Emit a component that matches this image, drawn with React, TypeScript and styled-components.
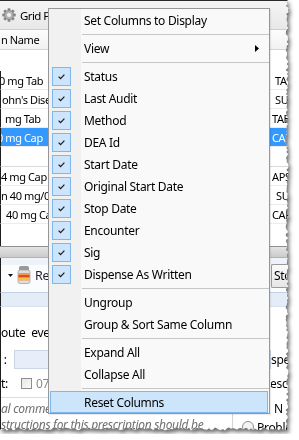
import React from 'react';
import styled, { createGlobalStyle } from 'styled-components';

const GlobalStyle = createGlobalStyle`
  html, body {
    margin: 0;
    padding: 0;
    background: #fff;
  }
  body {
    font-family: 'Noto Sans', 'Segoe UI', sans-serif;
    font-size: 12px;
    letter-spacing: -0.3px;
    color: #000;
  }
`;

// jagged right and bottom edge of the torn screenshot
const tornEdge = () => {
  let seed = 11;
  const rnd = () => {
    seed = (seed * 16807) % 2147483647;
    return (seed % 1000) / 1000;
  };
  const pts = ['0px 0px'];
  for (let y = 0; y <= 428; y += 2) pts.push(`${(285.5 + rnd() * 3).toFixed(1)}px ${y}px`);
  for (let x = 287; x >= 0; x -= 2) pts.push(`${x}px ${(427.5 + rnd() * 3).toFixed(1)}px`);
  pts.push('0px 429px');
  return `polygon(${pts.join(',')})`;
};

const Shot = styled.div`
  width: 298px;
  filter: drop-shadow(2px 3px 2px rgba(0, 0, 0, 0.6));
`;

const Paper = styled.div`
  position: relative;
  width: 290px;
  height: 434px;
  overflow: hidden;
  background: #fff;
  display: flex;
  flex-direction: column;
`;

const TitleBar = styled.div`
  height: 30px;
  box-sizing: border-box;
  border-top: 1px solid #2a2a2a;
  border-bottom: 1px solid #cdcdcd;
  background: linear-gradient(#f5f5f5, #e8e8e8);
  display: flex;
  align-items: center;
  gap: 4px;
  padding-left: 2px;
  font-size: 11.5px;
  letter-spacing: -0.6px;
`;

const Columns = styled.div`
  display: grid;
  grid-template-columns: 270px 1fr;
  align-items: center;
`;

const GridHeader = styled(Columns)`
  height: 20px;
  box-sizing: border-box;
  border-bottom: 1px solid #d6d6d6;
  background: linear-gradient(#fdfdfd, #f1f1f1);
  padding-left: 1px;
  font-size: 11px;
  letter-spacing: -0.4px;
`;

const FilterRow = styled.div`
  height: 21px;
`;

const GridRow = styled(Columns)<{ $selected?: boolean; $height?: number; $line?: string }>`
  height: ${(p) => p.$height ?? 19}px;
  box-sizing: border-box;
  border-bottom: 1px solid ${(p) => p.$line ?? '#ececec'};
  background: ${(p) => (p.$selected ? '#3399ff' : 'transparent')};
  color: ${(p) => (p.$selected ? '#fff' : '#000')};
  white-space: nowrap;
  overflow: hidden;
  border-left: 1px solid #1e1e1e;
  font-size: 11px;
  letter-spacing: -0.4px;
`;

const Cell = styled.span<{ $shift?: number }>`
  overflow: hidden;
  text-indent: ${(p) => p.$shift ?? 0}px;
  white-space: nowrap;
`;

const GridFill = styled.div`
  height: 22px;
  border-left: 1px solid #1e1e1e;
`;

const Splitter = styled.div`
  height: 12px;
  box-sizing: border-box;
  border-top: 1px solid #8f8f8f;
  border-bottom: 1px solid #b3b3b3;
  background: linear-gradient(#e4e4e4, #cbcbcb);
`;

const Toolbar = styled(Columns)`
  height: 34px;
  box-sizing: border-box;
  background: linear-gradient(#eef3fa 0 7px, #fbfcfe 7px);
  border-left: 1px solid #1e1e1e;
`;

const ToolGroup = styled.div`
  display: flex;
  align-items: center;
  padding-left: 7px;
  gap: 4px;
  color: #2a1a2a;
  font-size: 12.5px;
`;

const StopButton = styled.div`
  height: 24px;
  margin-top: 1px;
  box-sizing: border-box;
  border: 1px solid #9a9a9a;
  border-right: none;
  border-radius: 2px 0 0 2px;
  background: linear-gradient(#fafafa, #e6e6e6);
  padding-left: 2px;
  line-height: 22px;
`;

const InfoBand = styled.div`
  height: 15px;
  box-sizing: border-box;
  border-top: 1px solid #c3d1e6;
  border-bottom: 1px solid #d7e0ee;
  background: #e4ecf8;
  border-left: 1px solid #1e1e1e;
`;

const Form = styled.div`
  flex: 1;
  display: flex;
  flex-direction: column;
  border-left: 1px solid #1e1e1e;
`;

const FormRow = styled(Columns)<{ $top: number; $height: number }>`
  margin-top: ${(p) => p.$top}px;
  height: ${(p) => p.$height}px;
  white-space: nowrap;
`;

const FieldLine = styled.div`
  display: flex;
  align-items: center;
  gap: 4px;
  overflow: hidden;
`;

const Input = styled.div`
  flex: 1;
  height: 19px;
  box-sizing: border-box;
  border: 1px solid #cad5e5;
  background: #e7eef9;
  margin-left: 3px;
`;

const Box = styled.span`
  width: 11px;
  height: 11px;
  box-sizing: border-box;
  border: 1px solid #8d8d8d;
  background: linear-gradient(135deg, #e6e6e6, #fafafa);
  margin-left: 9px;
`;

const Muted = styled.span`
  color: #8a8a8a;
`;

const Divider = styled.div`
  height: 1px;
  width: 232px;
  background: #dcdcdc;
  margin-top: 4px;
`;

const Note = styled.div`
  font-style: italic;
  color: #6f6f6f;
  white-space: nowrap;
  overflow: hidden;
`;

const ProblemCell = styled.div`
  align-self: start;
  display: flex;
  align-items: center;
  gap: 3px;
  height: 20px;
  border-left: 1px solid #d4d4d4;
  padding: 6px 0 0 9px;
  margin-left: -39px;
  box-sizing: border-box;
`;

const Radio = styled.span`
  width: 10px;
  height: 10px;
  border-radius: 50%;
  border: 1px solid #8e8e8e;
  background: #f4f4f4;
`;

/* ---------- context menu ---------- */

const Menu = styled.div`
  position: absolute;
  left: 48px;
  top: 8px;
  width: 222px;
  box-sizing: border-box;
  border: 1px solid #979797;
  background: linear-gradient(to right, #f1f1f1 32px, #f9f9f9 32px);
  letter-spacing: -0.3px;
  box-shadow: 1px 1px 1px rgba(0, 0, 0, 0.08);
`;

const Item = styled.div<{ $active?: boolean }>`
  height: 22px;
  box-sizing: border-box;
  display: flex;
  align-items: center;
  padding: 0 10px 0 ${(p) => (p.$active ? 1 : 3)}px;
  margin: 0 ${(p) => (p.$active ? '1px 0 1px' : '0')};
  border: ${(p) => (p.$active ? '1px solid #7eb6ee' : 'none')};
  background: ${(p) => (p.$active ? '#cde5fb' : 'transparent')};
`;

const CheckSlot = styled.span`
  width: 32px;
  display: flex;
  align-items: center;
`;

const CheckBox = styled.span`
  width: 19px;
  height: 19px;
  box-sizing: border-box;
  border: 1px solid #7db7ef;
  background: #cde5fc;
  display: flex;
`;

const Label = styled.span`
  flex: 1;
`;

const Separator = styled.div`
  height: 6px;
  display: flex;
  align-items: center;
  margin-left: 33px;

  &::after {
    content: '';
    flex: 1;
    height: 1px;
    background: #c6c6c6;
  }
`;

const Gear = () => (
  <svg width="14" height="14" viewBox="0 0 15 15">
    <g fill="#858585">
      {[0, 45, 90, 135].map((a) => (
        <rect key={a} x="6" y="0.3" width="3" height="14.4" rx="0.6" transform={`rotate(${a} 7.5 7.5)`} />
      ))}
      <circle cx="7.5" cy="7.5" r="5.2" />
    </g>
    <circle cx="7.5" cy="7.5" r="4.2" fill="#b4b4b4" />
    <circle cx="7.5" cy="7.5" r="2.2" fill="#f0f0f0" />
  </svg>
);

const Check = () => (
  <svg width="17" height="17" viewBox="0 0 17 17">
    <polyline points="5.6,8.6 7.6,10.6 11.4,6.6" fill="none" stroke="#1f1f1f" strokeWidth="1.3" />
  </svg>
);

const SubArrow = () => (
  <svg width="4" height="7" viewBox="0 0 4 7">
    <polygon points="0,0 4,3.5 0,7" fill="#000" />
  </svg>
);

const DropArrow = () => (
  <svg width="5" height="3" viewBox="0 0 5 3">
    <polygon points="0,0 5,0 2.5,3" fill="#111" />
  </svg>
);

const Bottle = () => (
  <svg width="14" height="18" viewBox="0 0 14 18">
    <rect x="2.5" y="0.5" width="9" height="4" rx="1" fill="#9a9a9a" stroke="#777" strokeWidth="0.6" />
    <rect x="1" y="4" width="12" height="13.5" rx="2" fill="#dedede" stroke="#9b9b9b" strokeWidth="0.7" />
    <rect x="1.4" y="7" width="11.2" height="7.5" fill="#f49a45" />
    <rect x="1.4" y="9" width="11.2" height="2.2" fill="#e2483c" />
    <rect x="1.4" y="12.2" width="11.2" height="1.4" fill="#f6d24a" />
  </svg>
);

type Row = { name: string; shift: number; form: string; formShift: number; selected?: boolean };

const topRows: Row[] = [
  { name: '0 mg Tab', shift: -2, form: 'TA', formShift: 4 },
  { name: "ohn's Dise", shift: 1, form: 'SU', formShift: 4 },
  { name: 'mg Tab', shift: 4, form: 'TAB', formShift: 1 },
  { name: '0 mg Cap', shift: -4, form: 'CAP', formShift: 1, selected: true },
];

const bottomRows: Row[] = [
  { name: '4 mg Cap', shift: 0, form: 'APS', formShift: 1 },
  { name: 'n 40 mg/0', shift: 0, form: 'SU', formShift: 5 },
  { name: '40 mg Ca', shift: 5, form: 'CAP', formShift: 1 },
];

type Entry = { label?: string; checked?: boolean; sub?: boolean; active?: boolean; sep?: boolean };

const menu: Entry[] = [
  { label: 'Set Columns to Display' },
  { sep: true },
  { label: 'View', sub: true },
  { sep: true },
  { label: 'Status', checked: true },
  { label: 'Last Audit', checked: true },
  { label: 'Method', checked: true },
  { label: 'DEA Id', checked: true },
  { label: 'Start Date', checked: true },
  { label: 'Original Start Date', checked: true },
  { label: 'Stop Date', checked: true },
  { label: 'Encounter', checked: true },
  { label: 'Sig', checked: true },
  { label: 'Dispense As Written', checked: true },
  { sep: true },
  { label: 'Ungroup' },
  { label: 'Group & Sort Same Column' },
  { sep: true },
  { label: 'Expand All' },
  { label: 'Collapse All' },
  { sep: true },
  { label: 'Reset Columns', active: true },
];

const renderRow = (r: Row) => (
  <GridRow key={r.name} $selected={r.selected}>
    <Cell $shift={r.shift}>{r.name}</Cell>
    <Cell $shift={r.formShift}>{r.form}</Cell>
  </GridRow>
);

const App = () => (
  <>
    <GlobalStyle />
    <Shot>
      <Paper style={{ clipPath: tornEdge() }}>
        <TitleBar>
          <Gear />
          <span>Grid P</span>
        </TitleBar>
        <GridHeader>
          <Cell>n Name</Cell>
          <Cell />
        </GridHeader>
        <FilterRow />
        {topRows.map(renderRow)}
        <GridRow $height={20} $line="#d9d9d9">
          <Cell />
          <Cell />
        </GridRow>
        {bottomRows.map(renderRow)}
        <GridFill />
        <Splitter />
        <Toolbar>
          <ToolGroup>
            <DropArrow />
            <Bottle />
            <span>Re</span>
          </ToolGroup>
          <StopButton>Sto</StopButton>
        </Toolbar>
        <InfoBand />
        <Form>
          <FormRow $top={15} $height={20}>
            <Cell>oute&nbsp;&nbsp;eve</Cell>
          </FormRow>
          <FormRow $top={8} $height={19}>
            <FieldLine>
              <span>&nbsp;:</span>
              <Input />
            </FieldLine>
            <Cell>spe</Cell>
          </FormRow>
          <FormRow $top={4} $height={20}>
            <FieldLine>
              <span>t:</span>
              <Box />
              <Muted>07/0</Muted>
            </FieldLine>
            <Cell $shift={-1}>escr</Cell>
          </FormRow>
          <Divider />
          <FormRow $top={4} $height={12}>
            <Note>al comme</Note>
            <Cell $shift={3}>N</Cell>
          </FormRow>
          <FormRow $top={0} $height={12}>
            <Note>structions for this prescription should be</Note>
            <ProblemCell>
              <Radio />
              <span>Proble</span>
            </ProblemCell>
          </FormRow>
        </Form>

        <Menu>
          {menu.map((m, i) =>
            m.sep ? (
              <Separator key={i} />
            ) : (
              <Item key={i} $active={m.active}>
                <CheckSlot>
                  {m.checked && (
                    <CheckBox>
                      <Check />
                    </CheckBox>
                  )}
                </CheckSlot>
                <Label>{m.label}</Label>
                {m.sub && <SubArrow />}
              </Item>
            )
          )}
        </Menu>
      </Paper>
    </Shot>
  </>
);

export default App;
